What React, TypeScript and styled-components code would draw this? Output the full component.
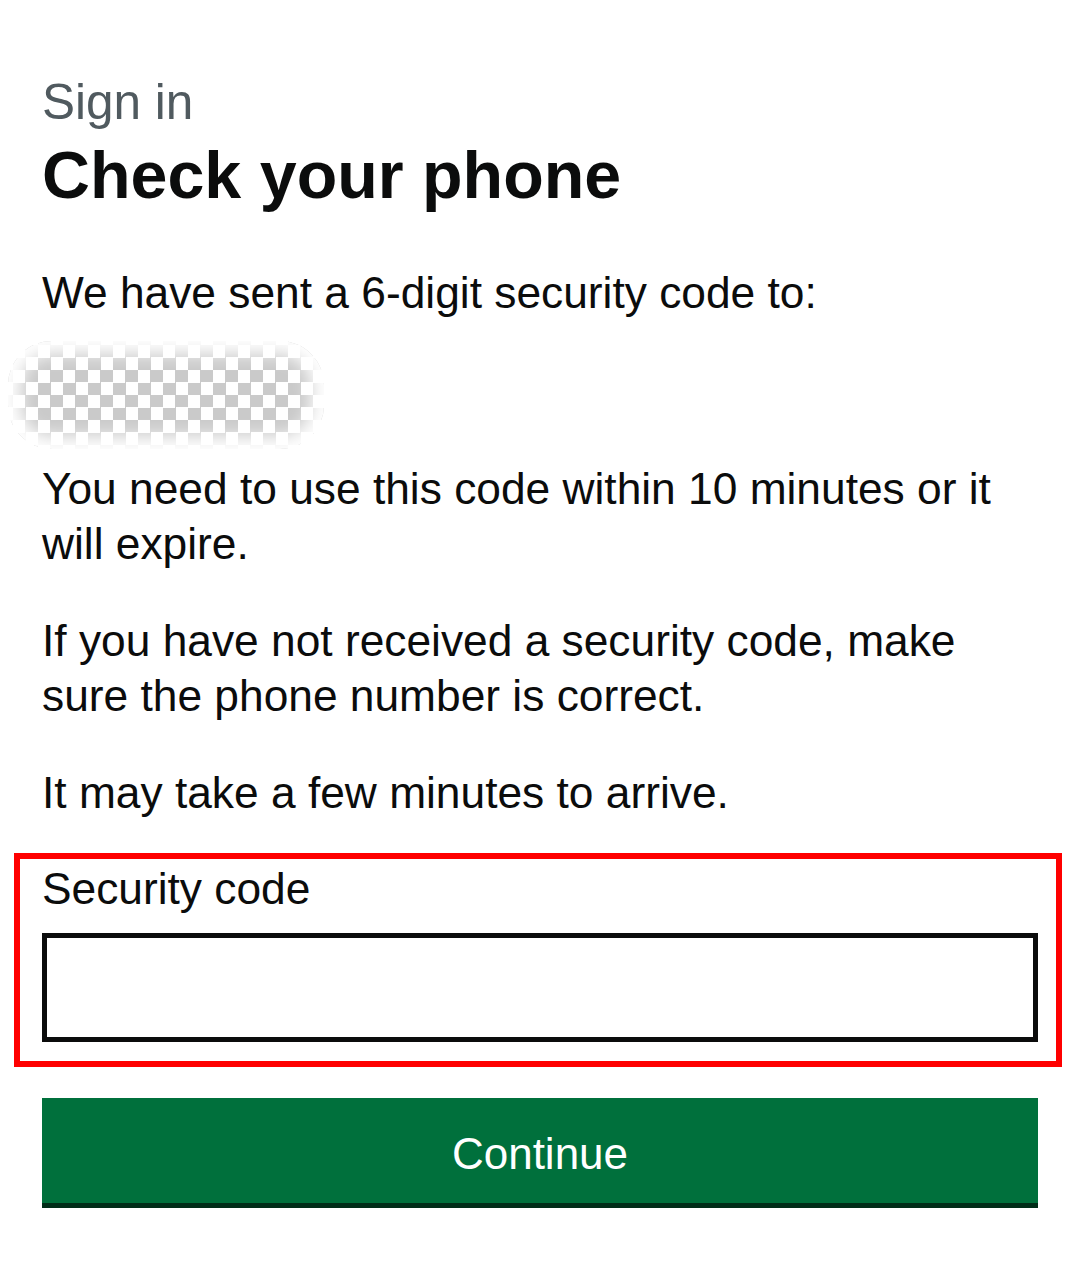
import styled, { createGlobalStyle } from "styled-components";

const GlobalStyle = createGlobalStyle`
    body {
        margin: 0;
        background: #ffffff;
        font-family: "Liberation Sans", Arial, sans-serif;
        color: #0b0c0c;
    }
`;

const Page = styled.main`
    width: 1080px;
    box-sizing: border-box;
    padding: 74px 42px 60px;
`;

// small grey line over the heading
const Caption = styled.span`
    display: block;
    font-size: 49.5px;
    line-height: 55px;
    color: #505a5f;
    margin-bottom: 5px;
`;

const Heading = styled.h1`
    margin: 0 0 49px;
    font-size: 66.4px;
    line-height: 82px;
    font-weight: 700;
`;

const Body = styled.p<{ $gap?: number }>`
    margin: 0 0 ${(p) => (p.$gap ?? 42)}px;
    font-size: 44.3px;
    line-height: 55px;
`;

// the phone number, hidden under a blurred checker pattern
const Redacted = styled.div`
    width: 316px;
    height: 108px;
    margin: -1px 0 12px -34px;
    border-radius: 44px;
    background: repeating-conic-gradient(#cacaca 0 25%, #ffffff 0 50%) 5px 4px / 25px 25px;
    box-shadow: inset 0 0 18px 13px #ffffff;
    filter: blur(0.7px);
`;

// red outline round the form group
const Highlight = styled.div`
    margin: 0 -24px 0 -28px;
    padding: 2px 18px 19px 22px;
    border: 6px solid #ff0000;
`;

const Label = styled.label`
    display: block;
    font-size: 44.3px;
    line-height: 55px;
    margin-bottom: 17px;
`;

const Input = styled.input`
    display: block;
    width: 100%;
    height: 109px;
    box-sizing: border-box;
    margin: 0;
    border: 5px solid #0b0c0c;
    border-radius: 0;
    font: inherit;
    font-size: 44px;
    padding: 0 16px;
    background: #ffffff;
    outline: none;
`;

const Button = styled.button`
    display: block;
    width: 100%;
    height: 105px;
    margin-top: 31px;
    padding: 6px 0 0;
    border: 0;
    border-radius: 0;
    background: #00703c;
    box-shadow: 0 5px 0 #002d18;
    color: #ffffff;
    font-family: "Liberation Sans", Arial, sans-serif;
    font-size: 44px;
    line-height: 55px;
    cursor: pointer;
`;

function App() {
    return (
        <>
            <GlobalStyle />
            <Page>
                <Caption>Sign in</Caption>
                <Heading>Check your phone</Heading>
                <Body $gap={22}>We have sent a 6-digit security code to:</Body>
                <Redacted />
                <Body>You need to use this code within 10 minutes or it will expire.</Body>
                <Body>If you have not received a security code, make sure the phone number is correct.</Body>
                <Body $gap={33}>It may take a few minutes to arrive.</Body>
                <Highlight>
                    <Label htmlFor="code">Security code</Label>
                    <Input id="code" type="text" inputMode="numeric" />
                </Highlight>
                <Button type="button">Continue</Button>
            </Page>
        </>
    );
}

export default App;
